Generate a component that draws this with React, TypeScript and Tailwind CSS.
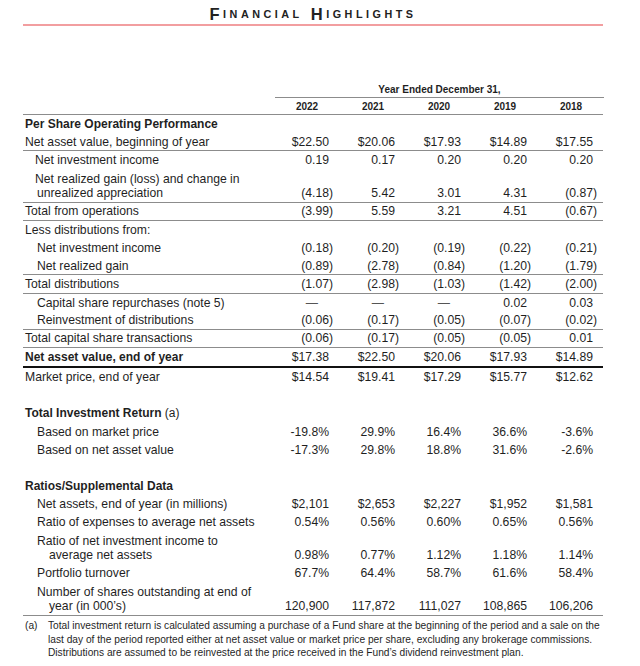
type Line = "none" | "thin" | "thick";

type RowDef = {
  label: string;
  sub?: string;
  values?: string[];
  pad: string;
  subPad?: string;
  bold?: boolean;
  note?: string;
  line?: Line;
  h?: string;
};

const GRID = "grid grid-cols-[251px_repeat(5,66px)]";

const perShare: RowDef[] = [
  { label: "Per Share Operating Performance", pad: "pl-[2px]", bold: true },
  { label: "Net asset value, beginning of year", pad: "pl-[2px]", values: ["$22.50", "$20.06", "$17.93", "$14.89", "$17.55"], line: "thin" },
  { label: "Net investment income", pad: "pl-[12px]", values: ["0.19", "0.17", "0.20", "0.20", "0.20"] },
  {
    label: "Net realized gain (loss) and change in",
    sub: "unrealized appreciation",
    pad: "pl-[12px]",
    subPad: "pl-[2px]",
    values: ["(4.18)", "5.42", "3.01", "4.31", "(0.87)"],
    line: "thin",
  },
  { label: "Total from operations", pad: "pl-[2px]", values: ["(3.99)", "5.59", "3.21", "4.51", "(0.67)"], line: "thin" },
  { label: "Less distributions from:", pad: "pl-[2px]" },
  { label: "Net investment income", pad: "pl-[14px]", values: ["(0.18)", "(0.20)", "(0.19)", "(0.22)", "(0.21)"] },
  { label: "Net realized gain", pad: "pl-[14px]", values: ["(0.89)", "(2.78)", "(0.84)", "(1.20)", "(1.79)"], line: "thin" },
  { label: "Total distributions", pad: "pl-[2px]", values: ["(1.07)", "(2.98)", "(1.03)", "(1.42)", "(2.00)"], line: "thin" },
  { label: "Capital share repurchases (note 5)", pad: "pl-[14px]", values: ["—", "—", "—", "0.02", "0.03"] },
  { label: "Reinvestment of distributions", pad: "pl-[14px]", values: ["(0.06)", "(0.17)", "(0.05)", "(0.07)", "(0.02)"], line: "thin" },
  { label: "Total capital share transactions", pad: "pl-[2px]", values: ["(0.06)", "(0.17)", "(0.05)", "(0.05)", "0.01"], line: "thin" },
  { label: "Net asset value, end of year", pad: "pl-[2px]", bold: true, values: ["$17.38", "$22.50", "$20.06", "$17.93", "$14.89"], line: "thick", h: "h-[20px]" },
  { label: "Market price, end of year", pad: "pl-[2px]", values: ["$14.54", "$19.41", "$17.29", "$15.77", "$12.62"] },
];

const returns: RowDef[] = [
  { label: "Total Investment Return", note: " (a)", pad: "pl-[2px]", bold: true },
  { label: "Based on market price", pad: "pl-[14px]", values: ["-19.8%", "29.9%", "16.4%", "36.6%", "-3.6%"] },
  { label: "Based on net asset value", pad: "pl-[14px]", values: ["-17.3%", "29.8%", "18.8%", "31.6%", "-2.6%"] },
];

const ratios: RowDef[] = [
  { label: "Ratios/Supplemental Data", pad: "pl-[2px]", bold: true },
  { label: "Net assets, end of year (in millions)", pad: "pl-[14px]", values: ["$2,101", "$2,653", "$2,227", "$1,952", "$1,581"] },
  { label: "Ratio of expenses to average net assets", pad: "pl-[14px]", values: ["0.54%", "0.56%", "0.60%", "0.65%", "0.56%"] },
  {
    label: "Ratio of net investment income to",
    sub: "average net assets",
    pad: "pl-[14px]",
    subPad: "pl-[12px]",
    values: ["0.98%", "0.77%", "1.12%", "1.18%", "1.14%"],
  },
  { label: "Portfolio turnover", pad: "pl-[14px]", values: ["67.7%", "64.4%", "58.7%", "61.6%", "58.4%"] },
  {
    label: "Number of shares outstanding at end of",
    sub: "year (in 000’s)",
    pad: "pl-[14px]",
    subPad: "pl-[12px]",
    values: ["120,900", "117,872", "111,027", "108,865", "106,206"],
    line: "thin",
  },
];

function valuePad(v: string) {
  if (v === "—") return "pr-[22px] text-[#555]";
  if (v.endsWith(")")) return "pr-[7px]";
  return "pr-[11px]";
}

function Row({ row }: { row: RowDef }) {
  const height = row.sub ? "h-[33px]" : row.h ?? "h-[18.2px]";
  const line =
    row.line === "thin"
      ? "border-b border-[#8c8c8c]"
      : row.line === "thick"
        ? "border-b-2 border-[#111]"
        : "";

  return (
    <div className={`${GRID} ${height} ${line}`}>
      <div className={`flex flex-col justify-center leading-[14px] ${row.pad}`}>
        <span className={row.bold ? "font-bold text-[12px]" : ""}>
          {row.label}
          {row.note && <span className="font-normal">{row.note}</span>}
        </span>
        {row.sub && <span className={row.subPad}>{row.sub}</span>}
      </div>
      {row.values?.map((v, i) => (
        <div key={i} className={`flex flex-col justify-center items-end leading-[14px] ${valuePad(v)}`}>
          {row.sub && <span className="h-[14px]" />}
          <span>{v}</span>
        </div>
      ))}
    </div>
  );
}

export default function App() {
  return (
    <div className="w-[640px] h-[666px] bg-white text-[#1f1f1f] font-['Liberation_Sans',Arial,sans-serif] text-[12.2px]">
      <div className="ml-[23px] w-[580px]">
        {/* Title */}
        <div className="h-[24px] pt-[5px] flex items-center justify-center font-bold tracking-[3.5px] text-[#222]">
          <span className="text-[16.5px]">F</span>
          <span className="text-[10.8px]">INANCIAL</span>
          <span className="text-[16.5px]">&nbsp;H</span>
          <span className="text-[10.8px]">IGHLIGHTS</span>
        </div>
        <div className="h-[1.5px] bg-[#f29ea0]" />

        {/* Column heads */}
        <div className={`${GRID} mt-[56.5px] font-bold text-[10px]`}>
          <div className="h-[16px]" />
          <div className="col-span-5 h-[16px] ml-[1px] flex items-center justify-center border-b border-[#8c8c8c]">
            Year Ended December 31,
          </div>
        </div>
        <div className={`${GRID} h-[17px] border-b border-[#8c8c8c] font-bold text-[10px]`}>
          <div />
          {["2022", "2021", "2020", "2019", "2018"].map((y) => (
            <div key={y} className="flex items-center justify-center pt-[1px]">
              {y}
            </div>
          ))}
        </div>

        {perShare.map((r, i) => (
          <Row key={i} row={r} />
        ))}

        <div className="mt-[18px]">
          {returns.map((r, i) => (
            <Row key={i} row={r} />
          ))}
        </div>

        <div className="mt-[18px]">
          {ratios.map((r, i) => (
            <Row key={i} row={r} />
          ))}
        </div>

        {/* Footnote */}
        <div className="flex pt-[3.5px] text-[10.2px] leading-[13.5px] pl-[2px]">
          <span className="w-[23px] shrink-0">(a)</span>
          <div className="flex flex-col whitespace-nowrap">
            <span>
              Total investment return is calculated assuming a purchase of a Fund share at the beginning of the period and a sale on the
            </span>
            <span>
              last day of the period reported either at net asset value or market price per share, excluding any brokerage commissions.
            </span>
            <span>Distributions are assumed to be reinvested at the price received in the Fund’s dividend reinvestment plan.</span>
          </div>
        </div>
      </div>
    </div>
  );
}
